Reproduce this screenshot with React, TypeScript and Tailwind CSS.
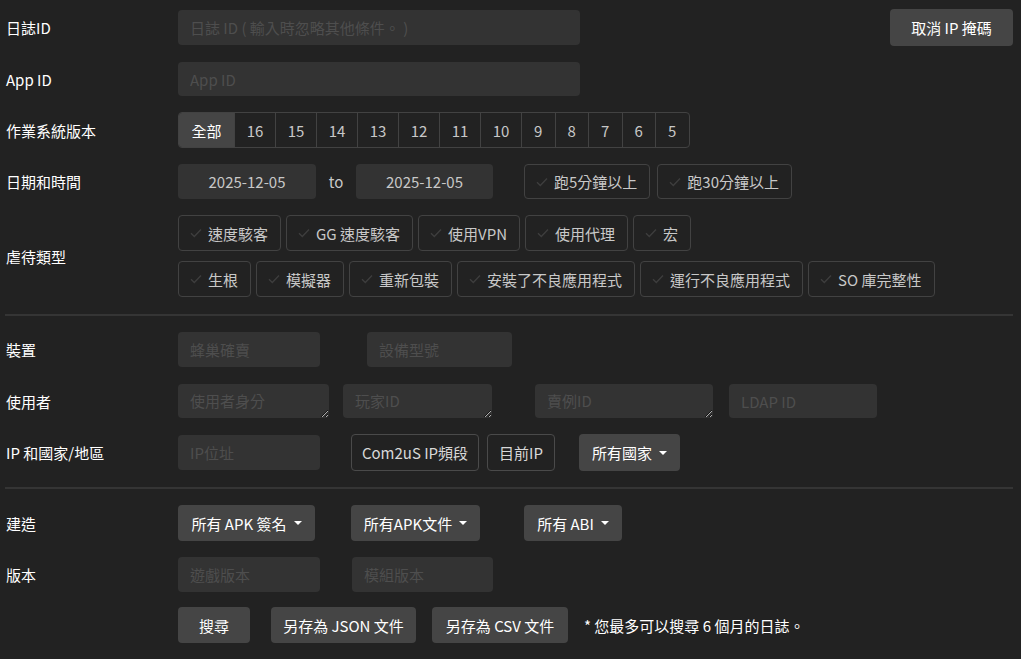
import type { ReactNode } from 'react'

const font = { fontFamily: '"Noto Sans CJK TC", "Noto Sans", sans-serif' }

const osVersions = ['16', '15', '14', '13', '12', '11', '10', '9', '8', '7', '6', '5']

const abuseRow1 = ['速度駭客', 'GG 速度駭客', '使用VPN', '使用代理', '宏']
const abuseRow2 = ['生根', '模擬器', '重新包裝', '安裝了不良應用程式', '運行不良應用程式', 'SO 庫完整性']

function Check() {
  return (
    <svg width="12" height="10" viewBox="0 0 12 10" fill="none" className="shrink-0">
      <path d="M1 5.2 L4.3 8.5 L11 1.5" stroke="#3e3e3e" strokeWidth="1.3" />
    </svg>
  )
}

function Caret() {
  return (
    <span className="ml-[7px] inline-block h-0 w-0 border-x-[4px] border-t-[4.5px] border-x-transparent border-t-white" />
  )
}

function CheckButton({ label, h = 'h-[36px]' }: { label: string; h?: string }) {
  return (
    <button
      className={`flex ${h} items-center gap-[6px] whitespace-nowrap rounded-[4px] border border-[#424242] pl-[11px] pr-[12px] text-[15px] text-[#c8c8c8]`}
    >
      <Check />
      <span className="leading-none">{label}</span>
    </button>
  )
}

function Row({ label, children, className = '' }: { label: string; children: ReactNode; className?: string }) {
  return (
    <div className={`flex items-center ${className}`}>
      <div className="w-[178px] shrink-0 pl-[6px] text-[15px] leading-none text-white">{label}</div>
      <div className="flex items-center">{children}</div>
    </div>
  )
}

function TextInput({ placeholder, w, h = 'h-[35px]' }: { placeholder: string; w: string; h?: string }) {
  return (
    <input
      placeholder={placeholder}
      className={`${w} ${h} rounded-[4px] bg-[#333333] px-[12px] text-[15px] text-[#c8c8c8] outline-none placeholder:text-[#4e4e4e]`}
    />
  )
}

function Area({ placeholder, w }: { placeholder: string; w: string }) {
  return (
    <textarea
      rows={1}
      placeholder={placeholder}
      className={`${w} block h-[34px] rounded-[4px] bg-[#333333] px-[12px] pt-[6px] text-[15px] leading-[22px] text-[#c8c8c8] outline-none [color-scheme:dark] placeholder:text-[#4e4e4e]`}
    />
  )
}

function SolidButton({ children, w, h = 'h-[36px]' }: { children: ReactNode; w: string; h?: string }) {
  return (
    <button
      className={`${w} ${h} flex items-center justify-center rounded-[4px] bg-[#454545] text-[15px] leading-none text-white`}
    >
      {children}
    </button>
  )
}

function OutlineButton({ children, w }: { children: ReactNode; w: string }) {
  return (
    <button
      className={`${w} flex h-[37px] items-center justify-center rounded-[4px] border border-[#4a4a4a] text-[15px] leading-none text-[#d8d8d8]`}
    >
      {children}
    </button>
  )
}

export default function App() {
  return (
    <div style={font} className="h-[659px] w-[1021px] overflow-hidden bg-[#222222] pt-[9px]">
      {/* log id + unmask */}
      <div className="flex items-center">
        <div className="w-[178px] shrink-0 pl-[6px] text-[15px] leading-none text-white">日誌ID</div>
        <TextInput placeholder="日誌 ID ( 輸入時忽略其他條件。 )" w="w-[402px]" />
        <div className="ml-auto mr-[8px]">
          <SolidButton w="w-[123px]" h="h-[37px]">取消 IP 掩碼</SolidButton>
        </div>
      </div>

      <Row label="App ID" className="mt-[16px]">
        <TextInput placeholder="App ID" w="w-[402px]" h="h-[34px]" />
      </Row>

      <Row label="作業系統版本" className="mt-[16px]">
        <div className="flex h-[36px] overflow-hidden rounded-[4px] border border-[#424242]">
          <div className="flex w-[55px] items-center justify-center bg-[#454545] text-[15px] leading-none text-white">
            全部
          </div>
          {osVersions.map((v) => (
            <div
              key={v}
              className={`flex items-center justify-center border-l border-[#424242] text-[15px] leading-none text-[#c8c8c8] ${
                v.length > 1 ? 'w-[41px]' : 'w-[33.5px]'
              }`}
            >
              {v}
            </div>
          ))}
        </div>
      </Row>

      <Row label="日期和時間" className="mt-[16px]">
        <input
          readOnly
          value="2025-12-05"
          className="h-[35px] w-[138px] rounded-[4px] bg-[#333333] text-center text-[15px] text-[#c8c8c8] outline-none"
        />
        <span className="w-[40px] text-center text-[15px] leading-none text-[#c8c8c8]">to</span>
        <input
          readOnly
          value="2025-12-05"
          className="h-[35px] w-[137px] rounded-[4px] bg-[#333333] text-center text-[15px] text-[#c8c8c8] outline-none"
        />
        <div className="ml-[31px] flex gap-[7px]">
          <CheckButton label="跑5分鐘以上" h="h-[35px]" />
          <CheckButton label="跑30分鐘以上" h="h-[35px]" />
        </div>
      </Row>

      <Row label="虐待類型" className="mt-[16px]">
        <div className="flex flex-col gap-[10px]">
          <div className="flex gap-[5px]">
            {abuseRow1.map((a) => (
              <CheckButton key={a} label={a} />
            ))}
          </div>
          <div className="flex gap-[5px]">
            {abuseRow2.map((a) => (
              <CheckButton key={a} label={a} />
            ))}
          </div>
        </div>
      </Row>

      <div className="mx-[5px] mt-[17px] h-[2px] w-[1008px] bg-[#353535]" />

      <Row label="裝置" className="mt-[16px]">
        <TextInput placeholder="蜂巢確賣" w="w-[142px]" />
        <div className="ml-[47px]">
          <TextInput placeholder="設備型號" w="w-[145px]" />
        </div>
      </Row>

      <Row label="使用者" className="mt-[17px]">
        <Area placeholder="使用者身分" w="w-[151px]" />
        <div className="ml-[14px]">
          <Area placeholder="玩家ID" w="w-[149px]" />
        </div>
        <div className="ml-[43px]">
          <Area placeholder="賣例ID" w="w-[178px]" />
        </div>
        <div className="ml-[16px]">
          <TextInput placeholder="LDAP ID" w="w-[148px]" h="h-[34px]" />
        </div>
      </Row>

      <Row label="IP 和國家/地區" className="mt-[16px]">
        <TextInput placeholder="IP位址" w="w-[142px]" />
        <div className="ml-[31px] flex items-center gap-[8px]">
          <OutlineButton w="w-[128px]">Com2uS IP頻段</OutlineButton>
          <OutlineButton w="w-[68px]">目前IP</OutlineButton>
        </div>
        <div className="ml-[24px]">
          <SolidButton w="w-[101px]" h="h-[37px]">
            所有國家
            <Caret />
          </SolidButton>
        </div>
      </Row>

      <div className="mx-[5px] mt-[16px] h-[2px] w-[1008px] bg-[#353535]" />

      <Row label="建造" className="mt-[16px]">
        <SolidButton w="w-[137px]">
          所有 APK 簽名
          <Caret />
        </SolidButton>
        <div className="ml-[36px]">
          <SolidButton w="w-[129px]">
            所有APK文件
            <Caret />
          </SolidButton>
        </div>
        <div className="ml-[44px]">
          <SolidButton w="w-[98px]">
            所有 ABI
            <Caret />
          </SolidButton>
        </div>
      </Row>

      <Row label="版本" className="mt-[16px]">
        <TextInput placeholder="遊戲版本" w="w-[142px]" />
        <div className="ml-[32px]">
          <TextInput placeholder="模組版本" w="w-[141px]" />
        </div>
      </Row>

      <Row label="" className="mt-[15px]">
        <SolidButton w="w-[72px]">搜尋</SolidButton>
        <div className="ml-[21px] flex items-center gap-[16px]">
          <SolidButton w="w-[145px]">另存為 JSON 文件</SolidButton>
          <SolidButton w="w-[136px]">另存為 CSV 文件</SolidButton>
          <span className="text-[15px] leading-none text-white">* 您最多可以搜尋 6 個月的日誌。</span>
        </div>
      </Row>
    </div>
  )
}
